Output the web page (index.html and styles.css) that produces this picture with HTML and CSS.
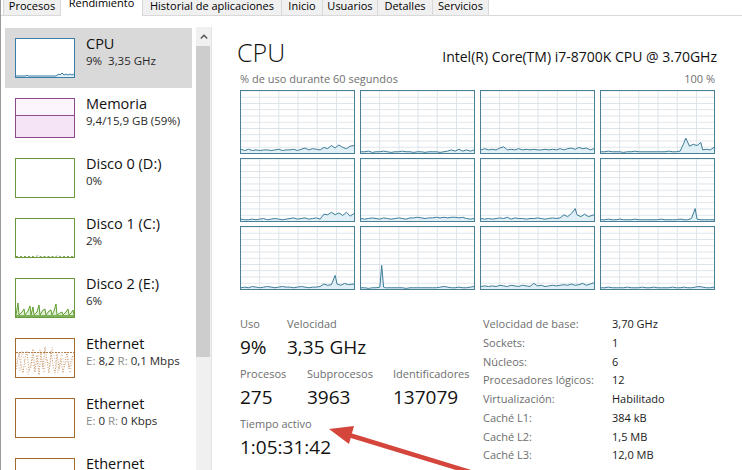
FILE: index.html
```html
<!DOCTYPE html>
<html lang="es">
<head>
<meta charset="utf-8">
<title>Administrador de tareas - Rendimiento</title>
<link rel="stylesheet" href="styles.css">
</head>
<body>
<div class="window">
  <nav class="tabs">
    <div class="tab w-proc"><span>Procesos</span></div>
    <div class="tab active w-rend"><span>Rendimiento</span></div>
    <div class="tab w-hist"><span>Historial de aplicaciones</span></div>
    <div class="tab w-ini"><span>Inicio</span></div>
    <div class="tab w-usu"><span>Usuarios</span></div>
    <div class="tab w-det"><span>Detalles</span></div>
    <div class="tab w-serv"><span>Servicios</span></div>
  </nav>
  <div class="content">
    <aside class="sidebar">
      <div class="list">
        <div class="item sel">
          <div class="thumb t-cpu">
            <svg viewBox="0 0 58 38" width="58" height="38"><polygon fill="#e4f0f7" points="0,37 10,37 11,36 12,37 40,37 43,35 44,36 46,34 48,36 50,35 52,36 54,35 56,36 58,35 58,38 0,38"/><polyline fill="none" stroke="#3b7ea8" stroke-width="1" points="0,37 10,37 11,36 12,37 40,37 43,35 44,36 46,34 48,36 50,35 52,36 54,35 56,36 58,35"/></svg>
          </div>
          <div class="meta"><div class="name">CPU</div><div class="detail">9%&nbsp; 3,35 GHz</div></div>
        </div>
        <div class="item">
          <div class="thumb t-mem">
            <svg viewBox="0 0 58 38" width="58" height="38"><rect x="0" y="0" width="58" height="16" fill="#fcf6fc"/><rect x="0" y="16" width="58" height="22" fill="#f5e4f5"/><line x1="0" y1="16.5" x2="58" y2="16.5" stroke="#8b4a8b" stroke-width="1"/></svg>
          </div>
          <div class="meta"><div class="name">Memoria</div><div class="detail">9,4/15,9 GB (59%)</div></div>
        </div>
        <div class="item">
          <div class="thumb t-disk"></div>
          <div class="meta"><div class="name">Disco 0 (D:)</div><div class="detail">0%</div></div>
        </div>
        <div class="item">
          <div class="thumb t-disk">
            <svg viewBox="0 0 58 38" width="58" height="38"><polyline fill="none" stroke="#7aa356" stroke-width="1" stroke-dasharray="2 2" points="0,37.5 20,37.5 22,36.5 24,37.5 40,37.5 42,36.5 44,37.5 58,37.5"/></svg>
          </div>
          <div class="meta"><div class="name">Disco 1 (C:)</div><div class="detail">2%</div></div>
        </div>
        <div class="item">
          <div class="thumb t-disk">
            <svg viewBox="0 0 58 38" width="58" height="38"><polygon fill="#e2efd6" points="0,36 2,24 3,36 6,33 8,30 9,36 12,32 14,27 15,36 17,28 18,36 21,33 23,26 24,36 27,31 29,30 30,36 33,32 35,31 36,36 38,32 40,25 41,36 44,34 46,33 47,36 50,33 52,30 53,36 55,34 57,31 58,36 58,38 0,38"/><polyline fill="none" stroke="#5f9e2f" stroke-width="1" points="0,36 2,24 3,36 6,33 8,30 9,36 12,32 14,27 15,36 17,28 18,36 21,33 23,26 24,36 27,31 29,30 30,36 33,32 35,31 36,36 38,32 40,25 41,36 44,34 46,33 47,36 50,33 52,30 53,36 55,34 57,31 58,36"/><line x1="0" y1="37" x2="58" y2="37" stroke="#5f9e2f" stroke-width="1.5"/></svg>
          </div>
          <div class="meta"><div class="name">Disco 2 (E:)</div><div class="detail">6%</div></div>
        </div>
        <div class="item">
          <div class="thumb t-eth">
            <svg viewBox="0 0 58 38" width="58" height="38"><line x1="0" y1="13.5" x2="58" y2="13.5" stroke="#b07a46" stroke-width="1" stroke-dasharray="2 1"/><polyline fill="none" stroke="#c48c5c" stroke-width="1" stroke-dasharray="1 1.5" points="0,30 3,14 5,26 7,34 9,20 11,12 13,32 15,28 17,10 19,33 21,16 23,36 25,14 27,30 29,8 31,22 33,34 35,12 37,26 39,34 41,15 43,30 45,20 47,34 49,24 51,13 53,30 55,22 57,16"/><polyline fill="none" stroke="#dcb896" stroke-width="1" stroke-dasharray="1 2" points="0,20 4,32 6,12 10,28 12,36 16,18 18,30 22,24 24,10 28,34 30,18 34,28 36,8 40,24 42,34 46,12 48,28 52,20 54,34 58,14"/></svg>
          </div>
          <div class="meta"><div class="name">Ethernet</div><div class="detail"><span class="g">E:</span> 8,2 <span class="g">R:</span> 0,1 Mbps</div></div>
        </div>
        <div class="item">
          <div class="thumb t-eth"></div>
          <div class="meta"><div class="name">Ethernet</div><div class="detail"><span class="g">E:</span> 0 <span class="g">R:</span> 0 Kbps</div></div>
        </div>
        <div class="item">
          <div class="thumb t-eth"></div>
          <div class="meta"><div class="name">Ethernet</div><div class="detail"><span class="g">E:</span> 0 <span class="g">R:</span> 0 Kbps</div></div>
        </div>
      </div>
      <div class="scrollbar">
        <div class="sb-btn"><svg viewBox="0 0 8 5" width="8" height="5"><polyline points="0.8,4.4 4,1.2 7.2,4.4" fill="none" stroke="#505050" stroke-width="1.4"/></svg></div>
        <div class="sb-thumb"></div>
      </div>
    </aside>

    <main class="main">
      <div class="head">
        <h1>CPU</h1>
        <div class="model">Intel(R) Core(TM) i7-8700K CPU @ 3.70GHz</div>
      </div>
      <div class="sub"><span>% de uso durante 60 segundos</span><span>100 %</span></div>
      <div class="grid">
        <div class="cell"><svg viewBox="0 0 60 100" preserveAspectRatio="none"><polygon class="area" points="0,94 2,96 4,94 6,96 8,95 10,96 12,95 14,95 16,96 18,95 20,94 22,96 24,95 26,95 28,94 30,96 32,94 34,92 36,95 38,93 40,94 42,95 44,91 46,93 48,88 50,92 52,87 54,91 56,93 58,89 60,88 60,100 0,100"/><polyline class="ln" points="0,94 2,96 4,94 6,96 8,95 10,96 12,95 14,95 16,96 18,95 20,94 22,96 24,95 26,95 28,94 30,96 32,94 34,92 36,95 38,93 40,94 42,95 44,91 46,93 48,88 50,92 52,87 54,91 56,93 58,89 60,88"/></svg></div>
        <div class="cell"><svg viewBox="0 0 60 100" preserveAspectRatio="none"><polygon class="area" points="0,98 2,98 4,97 6,99 8,98 10,98 12,97 14,98 16,99 18,98 20,98 22,97 24,98 26,98 28,99 30,98 32,98 34,99 36,98 38,98 40,98 42,99 44,98 46,97 48,95 50,97 52,94 54,97 56,95 58,97 60,95 60,100 0,100"/><polyline class="ln" points="0,98 2,98 4,97 6,99 8,98 10,98 12,97 14,98 16,99 18,98 20,98 22,97 24,98 26,98 28,99 30,98 32,98 34,99 36,98 38,98 40,98 42,99 44,98 46,97 48,95 50,97 52,94 54,97 56,95 58,97 60,95"/></svg></div>
        <div class="cell"><svg viewBox="0 0 60 100" preserveAspectRatio="none"><polygon class="area" points="0,95 2,93 4,95 6,94 8,95 10,92 12,90 14,95 16,94 18,95 20,93 22,95 24,94 26,95 28,94 30,95 32,95 34,94 36,95 38,94 40,95 42,93 44,95 46,93 48,92 50,94 52,91 54,93 56,92 58,95 60,93 60,100 0,100"/><polyline class="ln" points="0,95 2,93 4,95 6,94 8,95 10,92 12,90 14,95 16,94 18,95 20,93 22,95 24,94 26,95 28,94 30,95 32,95 34,94 36,95 38,94 40,95 42,93 44,95 46,93 48,92 50,94 52,91 54,93 56,92 58,95 60,93"/></svg></div>
        <div class="cell"><svg viewBox="0 0 60 100" preserveAspectRatio="none"><polygon class="area" points="0,98 2,98 4,97 6,98 8,98 10,98 12,99 14,98 16,98 18,97 20,98 22,98 24,98 26,98 28,98 30,98 32,98 34,98 36,97 38,98 40,98 42,97 44,84 45,76 47,89 49,86 51,88 53,83 54,95 56,94 58,95 60,91 60,100 0,100"/><polyline class="ln" points="0,98 2,98 4,97 6,98 8,98 10,98 12,99 14,98 16,98 18,97 20,98 22,98 24,98 26,98 28,98 30,98 32,98 34,98 36,97 38,98 40,98 42,97 44,84 45,76 47,89 49,86 51,88 53,83 54,95 56,94 58,95 60,91"/></svg></div>
        <div class="cell"><svg viewBox="0 0 60 100" preserveAspectRatio="none"><polygon class="area" points="0,97 2,98 4,98 6,97 8,98 10,97 12,96 14,98 16,97 18,96 20,97 22,98 24,97 26,96 28,95 30,97 32,96 34,95 36,97 38,96 40,95 42,97 44,89 46,90 48,86 50,90 52,87 54,91 56,86 58,92 60,88 60,100 0,100"/><polyline class="ln" points="0,97 2,98 4,98 6,97 8,98 10,97 12,96 14,98 16,97 18,96 20,97 22,98 24,97 26,96 28,95 30,97 32,96 34,95 36,97 38,96 40,95 42,97 44,89 46,90 48,86 50,90 52,87 54,91 56,86 58,92 60,88"/></svg></div>
        <div class="cell"><svg viewBox="0 0 60 100" preserveAspectRatio="none"><polygon class="area" points="0,96 2,97 4,96 6,95 8,96 10,97 12,95 14,96 16,97 18,96 20,95 22,96 24,97 26,95 28,95 30,94 32,95 34,96 36,95 38,95 40,94 42,95 44,94 46,95 48,94 50,94 52,95 54,94 56,96 58,97 60,96 60,100 0,100"/><polyline class="ln" points="0,96 2,97 4,96 6,95 8,96 10,97 12,95 14,96 16,97 18,96 20,95 22,96 24,97 26,95 28,95 30,94 32,95 34,96 36,95 38,95 40,94 42,95 44,94 46,95 48,94 50,94 52,95 54,94 56,96 58,97 60,96"/></svg></div>
        <div class="cell"><svg viewBox="0 0 60 100" preserveAspectRatio="none"><polygon class="area" points="0,96 2,97 4,96 6,97 8,96 10,95 12,96 14,94 16,97 18,95 20,96 22,96 24,97 26,96 28,96 30,95 32,96 34,97 36,96 38,95 40,96 42,95 44,90 46,93 48,88 50,80 51,90 53,93 55,89 57,93 60,90 60,100 0,100"/><polyline class="ln" points="0,96 2,97 4,96 6,97 8,96 10,95 12,96 14,94 16,97 18,95 20,96 22,96 24,97 26,96 28,96 30,95 32,96 34,97 36,96 38,95 40,96 42,95 44,90 46,93 48,88 50,80 51,90 53,93 55,89 57,93 60,90"/></svg></div>
        <div class="cell"><svg viewBox="0 0 60 100" preserveAspectRatio="none"><polygon class="area" points="0,98 2,98 4,97 6,98 8,98 10,97 12,98 14,98 16,98 18,97 20,98 22,98 24,98 26,98 28,98 30,98 32,97 34,98 36,98 38,98 40,98 42,97 44,98 46,98 48,96 50,80 51,97 53,98 55,98 57,98 60,98 60,100 0,100"/><polyline class="ln" points="0,98 2,98 4,97 6,98 8,98 10,97 12,98 14,98 16,98 18,97 20,98 22,98 24,98 26,98 28,98 30,98 32,97 34,98 36,98 38,98 40,98 42,97 44,98 46,98 48,96 50,80 51,97 53,98 55,98 57,98 60,98"/></svg></div>
        <div class="cell"><svg viewBox="0 0 60 100" preserveAspectRatio="none"><polygon class="area" points="0,98 2,97 4,98 6,96 8,97 10,98 12,97 14,96 16,97 18,98 20,97 22,96 24,97 26,97 28,98 30,97 32,96 34,97 36,98 38,97 40,97 42,96 44,92 46,94 48,93 50,78 51,92 53,94 55,91 57,93 60,92 60,100 0,100"/><polyline class="ln" points="0,98 2,97 4,98 6,96 8,97 10,98 12,97 14,96 16,97 18,98 20,97 22,96 24,97 26,97 28,98 30,97 32,96 34,97 36,98 38,97 40,97 42,96 44,92 46,94 48,93 50,78 51,92 53,94 55,91 57,93 60,92"/></svg></div>
        <div class="cell"><svg viewBox="0 0 60 100" preserveAspectRatio="none"><polygon class="area" points="0,98 2,98 4,99 6,98 8,98 10,97 11,62 12,97 13,98 14,98 16,98 18,98 20,98 22,98 24,99 26,98 28,98 30,98 32,98 34,98 36,98 38,98 40,98 42,97 44,96 46,97 48,98 50,98 52,97 54,98 56,98 58,97 60,96 60,100 0,100"/><polyline class="ln" points="0,98 2,98 4,99 6,98 8,98 10,97 11,62 12,97 13,98 14,98 16,98 18,98 20,98 22,98 24,99 26,98 28,98 30,98 32,98 34,98 36,98 38,98 40,98 42,97 44,96 46,97 48,98 50,98 52,97 54,98 56,98 58,97 60,96"/></svg></div>
        <div class="cell"><svg viewBox="0 0 60 100" preserveAspectRatio="none"><polygon class="area" points="0,96 2,95 4,96 6,95 8,96 10,94 12,95 14,96 16,94 18,95 20,96 22,94 24,95 26,96 28,91 30,95 32,94 34,96 36,95 38,94 40,95 42,94 44,93 46,94 48,92 50,94 52,93 54,91 56,94 58,92 60,90 60,100 0,100"/><polyline class="ln" points="0,96 2,95 4,96 6,95 8,96 10,94 12,95 14,96 16,94 18,95 20,96 22,94 24,95 26,96 28,91 30,95 32,94 34,96 36,95 38,94 40,95 42,94 44,93 46,94 48,92 50,94 52,93 54,91 56,94 58,92 60,90"/></svg></div>
        <div class="cell"><svg viewBox="0 0 60 100" preserveAspectRatio="none"><polygon class="area" points="0,98 2,98 4,97 6,98 8,98 10,98 12,98 14,97 16,98 18,98 20,98 22,97 24,98 26,98 28,97 30,98 32,98 34,98 36,98 38,97 40,98 42,98 44,97 46,98 48,98 50,97 52,96 54,97 56,98 58,98 60,97 60,100 0,100"/><polyline class="ln" points="0,98 2,98 4,97 6,98 8,98 10,98 12,98 14,97 16,98 18,98 20,98 22,97 24,98 26,98 28,97 30,98 32,98 34,98 36,98 38,97 40,98 42,98 44,97 46,98 48,98 50,97 52,96 54,97 56,98 58,98 60,97"/></svg></div>
      </div>

      <div class="stats">
        <div class="left">
          <div class="srow">
            <div class="stat w47"><div class="lbl">Uso</div><div class="val">9%</div></div>
            <div class="stat"><div class="lbl">Velocidad</div><div class="val">3,35 GHz</div></div>
          </div>
          <div class="srow">
            <div class="stat w67"><div class="lbl">Procesos</div><div class="val">275</div></div>
            <div class="stat w86"><div class="lbl">Subprocesos</div><div class="val">3963</div></div>
            <div class="stat"><div class="lbl">Identificadores</div><div class="val">137079</div></div>
          </div>
          <div class="srow">
            <div class="stat"><div class="lbl">Tiempo activo</div><div class="val">1:05:31:42</div></div>
          </div>
        </div>
        <table class="info">
          <tr><td class="k">Velocidad de base:</td><td class="v">3,70 GHz</td></tr>
          <tr><td class="k">Sockets:</td><td class="v">1</td></tr>
          <tr><td class="k">Núcleos:</td><td class="v">6</td></tr>
          <tr><td class="k">Procesadores lógicos:</td><td class="v">12</td></tr>
          <tr><td class="k">Virtualización:</td><td class="v">Habilitado</td></tr>
          <tr><td class="k">Caché L1:</td><td class="v">384 kB</td></tr>
          <tr><td class="k">Caché L2:</td><td class="v">1,5 MB</td></tr>
          <tr><td class="k">Caché L3:</td><td class="v">12,0 MB</td></tr>
        </table>
      </div>
    </main>
  </div>

  <svg class="arrow" viewBox="0 0 742 470" width="742" height="470">
    <line x1="480" y1="475" x2="349" y2="435" stroke="#d4463c" stroke-width="4.5" stroke-linecap="round"/>
    <polygon points="329,429 354,426 349,444" fill="#d4463c"/>
  </svg>
</div>
</body>
</html>
```

FILE: styles.css
```css
* {
  box-sizing: border-box;
  margin: 0;
  padding: 0;
}

html, body {
  width: 742px;
  height: 470px;
  overflow: hidden;
  background: #ffffff;
}

body {
  font-family: "Open Sans", "Noto Sans", "DejaVu Sans", sans-serif;
  color: #000000;
}

.window {
  position: relative;
  width: 742px;
  height: 470px;
  overflow: hidden;
  border-left: 1px solid #9a9a9a;
  display: flex;
  flex-direction: column;
}

/* Tabs */
.tabs {
  display: flex;
  height: 16px;
  flex: none;
  padding-left: 2px;
  border-bottom: 1px solid #d9d9d9;
}

.tab {
  height: 15px;
  background: #f0f0f0;
  border-right: 1px solid #d9d9d9;
  font-size: 11px;
  line-height: 12px;
  text-align: center;
  overflow: hidden;
  white-space: nowrap;
  color: #000;
}

.tab.active {
  background: #ffffff;
  height: 16px;
}

.tab.active span {
  display: block;
  margin-top: -3px;
}

.w-proc { width: 58px; border-left: 1px solid #d9d9d9; }
.w-rend { width: 82px; }
.w-hist { width: 139px; }
.w-ini { width: 41px; }
.w-usu { width: 55px; }
.w-det { width: 55px; }
.w-serv { width: 56px; }

/* Body */
.content {
  display: flex;
  flex: 1;
  min-height: 0;
  overflow: hidden;
}

.sidebar {
  width: 211px;
  flex: none;
  display: flex;
  overflow: hidden;
}

.list {
  width: 195px;
  padding: 12px 0 0 4px;
  overflow: hidden;
}

.item {
  width: 187px;
  height: 60px;
  display: flex;
  align-items: flex-start;
  gap: 11px;
  padding: 10px 0 0 10px;
}

.item.sel {
  background: #d9d9d9;
}

.thumb {
  width: 60px;
  height: 40px;
  flex: none;
  border: 1px solid;
  background: #ffffff;
}

.thumb svg {
  display: block;
}

.t-cpu { border-color: #3b7ea8; }
.t-mem { border-color: #8b4a8b; }
.t-disk { border-color: #6a9a3c; }
.t-eth { border-color: #a06a2a; }

.meta {
  margin-top: -3px;
  white-space: nowrap;
}

.name {
  font-size: 14.5px;
  line-height: 18px;
  color: #111;
}

.detail {
  font-size: 11.5px;
  line-height: 15px;
  color: #2a2a2a;
}

.detail .g {
  color: #8a8a8a;
}

/* Scrollbar */
.scrollbar {
  width: 16px;
  margin-top: 11px;
  background: #f0f0f0;
  border-right: 1px solid #e2e2e2;
  display: flex;
  flex-direction: column;
}

.sb-btn {
  height: 19px;
  display: flex;
  align-items: center;
  justify-content: center;
}

.sb-thumb {
  height: 311px;
  margin-right: 1px;
  background: #cdcdcd;
}

/* Main */
.main {
  flex: 1;
  min-width: 0;
  padding: 21px 27px 0 28px;
}

.head {
  display: flex;
  justify-content: space-between;
  align-items: baseline;
}

.head h1 {
  font-size: 25px;
  font-weight: 300;
  line-height: 30px;
  margin-left: -3px;
  color: #111;
}

.model {
  font-size: 14px;
  color: #111;
  margin-right: -2px;
}

.sub {
  display: flex;
  justify-content: space-between;
  font-size: 11px;
  line-height: 14px;
  color: #707070;
  margin-top: 5px;
}

.grid {
  display: grid;
  grid-template-columns: repeat(4, 115px);
  grid-auto-rows: 64px;
  column-gap: 5px;
  row-gap: 4px;
  margin-top: 4px;
}

.cell {
  border: 1px solid #4a8096;
  background-color: #ffffff;
  background-image:
    linear-gradient(to right, #dbe3e8 1px, transparent 1px),
    linear-gradient(to bottom, #dbe3e8 1px, transparent 1px);
  background-size: 19.2px 100%, 100% 6.25px;
  background-position: -1px 0, 0 -0.5px;
}

.cell svg {
  display: block;
  width: 100%;
  height: 100%;
}

.cell .area {
  fill: #dcedf6;
  fill-opacity: 0.85;
}

.cell .ln {
  fill: none;
  stroke: #3d7c98;
  stroke-width: 1;
  vector-effect: non-scaling-stroke;
}

/* Stats */
.stats {
  display: flex;
  margin-top: 25px;
}

.left {
  width: 243px;
  flex: none;
}

.srow {
  display: flex;
  margin-bottom: 6px;
}

.stat .lbl {
  font-size: 11px;
  line-height: 17px;
  color: #6e6e6e;
  white-space: nowrap;
}

.stat .val {
  font-size: 19px;
  line-height: 24px;
  margin-top: 3px;
  color: #111;
  white-space: nowrap;
}

.w47 { width: 47px; }
.w67 { width: 67px; }
.w86 { width: 86px; }

.info {
  border-collapse: collapse;
  font-size: 11px;
  line-height: 17.75px;
}

.info td {
  padding: 0;
  white-space: nowrap;
  vertical-align: top;
}

.info .k {
  width: 129px;
  color: #6e6e6e;
}

.info .v {
  color: #1a1a1a;
}

/* Annotation arrow */
.arrow {
  position: absolute;
  left: -1px;
  top: 0;
  pointer-events: none;
}
```
